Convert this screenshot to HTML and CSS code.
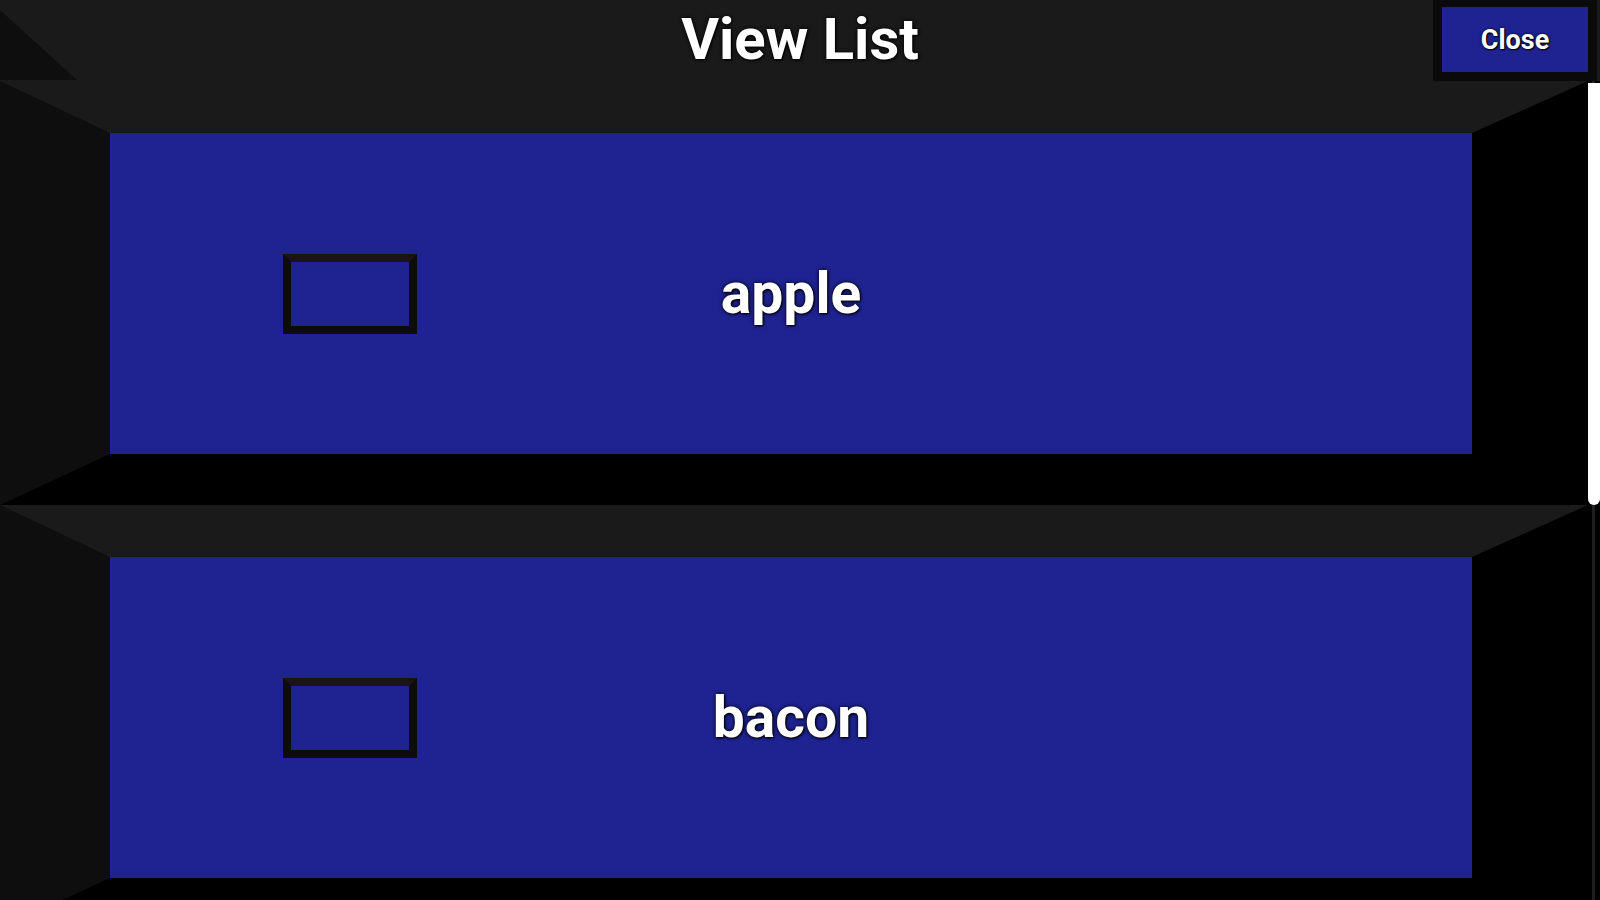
FILE: index.html
```html
<!DOCTYPE html>
<html lang="en">
  <head>
    <meta charset="UTF-8">
    <meta name="viewport" content="width=device-width, initial-scale=1">
    <title>View List</title>
    <link rel="stylesheet" href="styles.css">
  </head>
  <body>
    <header class="list-header">
      <h1 class="list-title">View List</h1>
      <button class="close-button" name="close">Close</button>
    </header>
    <div class="list-wrap">
      <main class="list-body">
        <div class="list-item">
          <input class="item-check" type="checkbox" name="apple">
          <span class="item-name">apple</span>
        </div>
        <div class="list-item">
          <input class="item-check" type="checkbox" name="bacon">
          <span class="item-name">bacon</span>
        </div>
      </main>
      <div class="scroll-track">
        <div class="scroll-thumb"></div>
      </div>
    </div>
  </body>
</html>
```

FILE: styles.css
```css
html, body {
  width: 100%;
  height: 100%;
  margin: 0;
  background-color: #000;
  color: white;
  font-family: Roboto, "Liberation Sans", sans-serif;
}

body {
  display: flex;
  flex-direction: column;
  overflow: hidden;
}

.list-header {
  flex-shrink: 0;
  height: 81px;
  position: relative;
  display: grid;
  grid-template-columns: 1fr auto 1fr;
  background-color: #1b1a1b;
}

/* dark corner left over from the bevel */
.list-header::before {
  content: "";
  position: absolute;
  left: 0;
  bottom: 1px;
  border-left: 77px solid #0f0e0e;
  border-top: 70px solid transparent;
}

.list-title {
  grid-column: 2;
  margin: 10px 0 0;
  align-self: start;
  font-size: 58px;
  line-height: 58px;
  font-weight: 700;
  text-shadow: 0 0 4px #000, 1px 1px 2px #000;
}

.close-button {
  grid-column: 3;
  justify-self: end;
  align-self: start;
  margin: 0 3px 0 0;
  width: 164px;
  height: 81px;
  background-color: #1e2391;
  border: solid #0b0a0a;
  border-width: 7px 9px 9px 9px;
  color: white;
  font-family: Roboto, "Liberation Sans", sans-serif;
  font-size: 27px;
  font-weight: 700;
  text-shadow: 0 0 3px #000, 1px 1px 1px #000;
  cursor: pointer;
}

.close-button:focus {
  outline: none;
}

.list-wrap {
  flex: 1;
  display: flex;
  min-height: 0;
}

.list-body {
  flex: 1;
  overflow: hidden;
}

.scroll-track {
  width: 12px;
  flex-shrink: 0;
  background: linear-gradient(to right, #000 4px, #1e1e1e 4px, #1e1e1e 7px, #000 7px);
}

.scroll-thumb {
  height: 422px;
  margin-top: 2px;
  background-color: #fff;
  border-radius: 0 0 6px 6px;
}

.list-item {
  height: 321px;
  display: grid;
  grid-template-columns: 1fr auto 1fr;
  align-items: center;
  background-color: #1e2391;
  border-style: solid;
  border-width: 52px 116px 51px 110px;
  border-color: #1b1a1b #000 #000 #0f0e0e;
}

.item-check {
  appearance: none;
  -webkit-appearance: none;
  justify-self: start;
  margin: 0 0 0 173px;
  width: 134px;
  height: 80px;
  box-sizing: border-box;
  background: transparent;
  border: 8px solid;
  border-color: #1a1412 #0e0b0b #0e0b0b #0e0b0b;
  border-radius: 0;
}

.item-name {
  font-size: 57px;
  font-weight: 700;
  text-shadow: 0 0 4px #000, 1px 1px 2px #000;
}
```
